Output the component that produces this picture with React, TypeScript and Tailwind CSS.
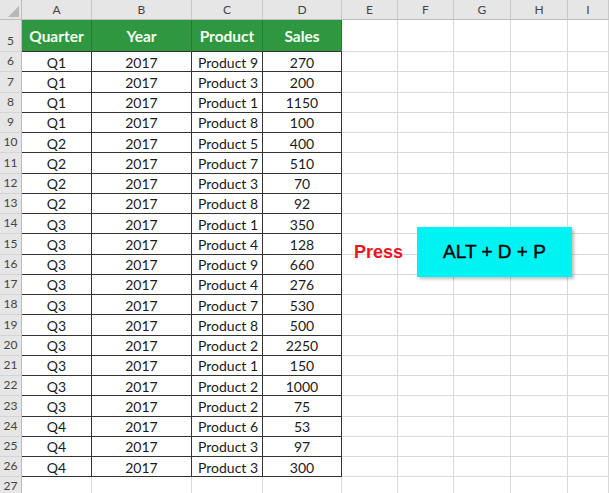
import React from "react";

const data: [string, string, string, string][] = [
  ["Q1", "2017", "Product 9", "270"],
  ["Q1", "2017", "Product 3", "200"],
  ["Q1", "2017", "Product 1", "1150"],
  ["Q1", "2017", "Product 8", "100"],
  ["Q2", "2017", "Product 5", "400"],
  ["Q2", "2017", "Product 7", "510"],
  ["Q2", "2017", "Product 3", "70"],
  ["Q2", "2017", "Product 8", "92"],
  ["Q3", "2017", "Product 1", "350"],
  ["Q3", "2017", "Product 4", "128"],
  ["Q3", "2017", "Product 9", "660"],
  ["Q3", "2017", "Product 4", "276"],
  ["Q3", "2017", "Product 7", "530"],
  ["Q3", "2017", "Product 8", "500"],
  ["Q3", "2017", "Product 2", "2250"],
  ["Q3", "2017", "Product 1", "150"],
  ["Q3", "2017", "Product 2", "1000"],
  ["Q3", "2017", "Product 2", "75"],
  ["Q4", "2017", "Product 6", "53"],
  ["Q4", "2017", "Product 3", "97"],
  ["Q4", "2017", "Product 3", "300"],
];

const cols = ["A", "B", "C", "D", "E", "F", "G", "H", "I"];
const empty = [0, 1, 2, 3, 4];

const rowNum =
  "flex items-end justify-center bg-[#e6e6e6] border-r border-b border-r-[#bdbdbd] border-b-[#d4d4d4] text-[12px] text-[#444] leading-none pb-[4px]";
const gridCell = "border-r border-b border-[#d9d9d9] bg-white";
const dataCell =
  "flex items-center border-r border-b border-[#333] bg-white text-[14px] text-[#1a1a1a] leading-none pt-[2px]";

export default function App() {
  return (
    <div
      className="relative w-[609px] h-[493px] overflow-hidden bg-white"
      style={{ fontFamily: "Lato, 'Open Sans', sans-serif" }}
    >
      <div className="grid grid-cols-[22px_70px_100px_71px_79px_56px_56px_57px_57px_1fr]">
        {/* column header row */}
        <div className="relative h-[20px] bg-[#e6e6e6] border-r border-b border-[#bdbdbd]">
          <svg className="absolute right-[2px] bottom-[2px]" width="11" height="11" viewBox="0 0 11 11">
            <polygon points="11,0 11,11 0,11" fill="#b8b8b8" />
          </svg>
        </div>
        {cols.map((c) => (
          <div
            key={c}
            className="h-[20px] flex items-center justify-center bg-[#e6e6e6] border-r border-b border-r-[#c8c8c8] border-b-[#bdbdbd] text-[12px] text-[#444]"
          >
            {c}
          </div>
        ))}

        {/* row 5 header */}
        <div className={`${rowNum} h-[32px]`}>5</div>
        {["Quarter", "Year", "Product", "Sales"].map((h) => (
          <div
            key={h}
            className="h-[32px] flex items-center justify-center bg-[#2f973f] border-r border-b border-r-[#237a31] border-b-[#333] text-[#f4fff4] font-bold text-[15.5px] pt-[3px]"
          >
            {h}
          </div>
        ))}
        {empty.map((e) => (
          <div key={e} className={`${gridCell} h-[32px]`} />
        ))}

        {data.map((r, i) => (
          <React.Fragment key={i}>
            <div className={`${rowNum} h-[20.25px] pb-[3px]`}>{i + 6}</div>
            <div className={`${dataCell} h-[20.25px] justify-center`}>{r[0]}</div>
            <div className={`${dataCell} h-[20.25px] justify-center`}>{r[1]}</div>
            <div className={`${dataCell} h-[20.25px] pl-[6px]`}>{r[2]}</div>
            <div className={`${dataCell} h-[20.25px] justify-center`}>{r[3]}</div>
            {empty.map((e) => (
              <div key={e} className={`${gridCell} h-[20.25px]`} />
            ))}
          </React.Fragment>
        ))}

        <div className={`${rowNum} h-[20px] pb-[3px]`}>27</div>
        {cols.map((c) => (
          <div key={c} className={`${gridCell} h-[20px]`} />
        ))}
      </div>

      {/* overlay */}
      <div
        className="absolute left-[354px] top-[243px] text-[18px] font-bold text-[#e8161e] leading-none"
        style={{ fontFamily: "'Liberation Sans', Arial, sans-serif" }}
      >
        Press
      </div>
      <div
        className="absolute left-[417px] top-[227px] w-[155px] h-[50px] bg-[#00f3f3] flex items-center justify-center text-[19px] text-black [-webkit-text-stroke:0.4px_#000] shadow-[2px_2px_3px_rgba(0,0,0,0.25)]"
        style={{ fontFamily: "'Liberation Sans', Arial, sans-serif" }}
      >
        ALT + D + P
      </div>
    </div>
  );
}
